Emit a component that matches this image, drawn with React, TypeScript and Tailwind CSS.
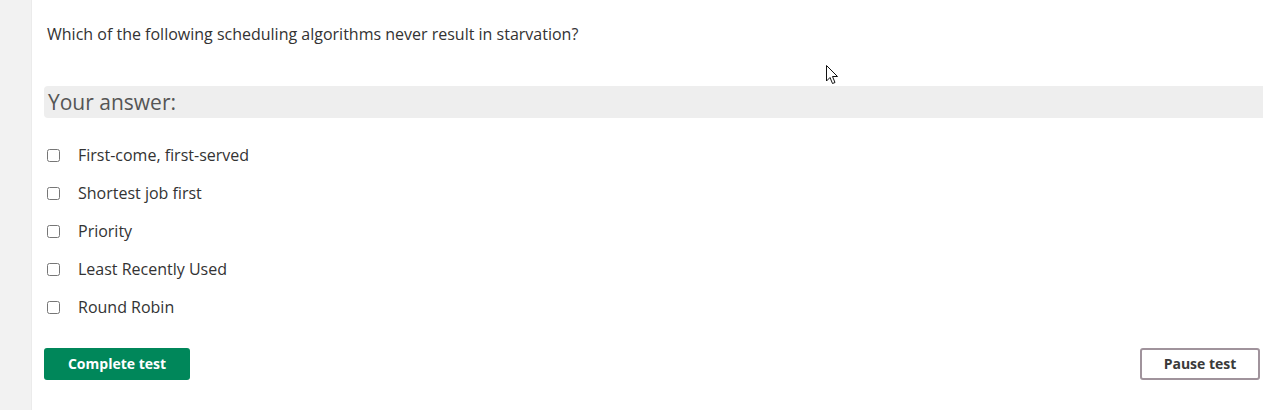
import React from "react";

const options = [
  "First-come, first-served",
  "Shortest job first",
  "Priority",
  "Least Recently Used",
  "Round Robin",
];

export default function App() {
  return (
    <div
      className="relative flex h-[410px] w-full bg-white text-[#333]"
      style={{ fontFamily: '"Open Sans", "Noto Sans", sans-serif' }}
    >
      <div className="w-[32px] shrink-0 border-r border-[#ebebeb] bg-[#f2f2f2]" />
      <div className="flex min-w-0 flex-1 flex-col pl-[12px] pt-[22px]">
        <p className="px-[3px] text-[16px] leading-[24px] text-[#333]">
          Which of the following scheduling algorithms never result in starvation?
        </p>
        <div className="mt-[40px] flex h-[32px] items-center rounded-l-[4px] bg-[#eeeeee] pl-[4px]">
          <span className="text-[21px] leading-[28px] text-[#555]">Your answer:</span>
        </div>
        <div className="mt-[18px] flex flex-col">
          {options.map((o) => (
            <label key={o} className="flex h-[38px] items-center pl-[3px]">
              <input type="checkbox" className="m-0 h-[13px] w-[13px]" />
              <span className="ml-[18px] text-[16px] leading-[24px] text-[#333]">{o}</span>
            </label>
          ))}
        </div>
        <div className="mt-[22px] flex items-center justify-between pr-[3px]">
          <button className="flex h-[32px] w-[146px] items-center justify-center rounded-[3px] bg-[#00875a] pb-[1px] text-[14px] font-bold leading-[20px] text-white">
            Complete test
          </button>
          <button className="flex h-[32px] w-[120px] items-center justify-center rounded-[3px] border-2 border-[#a0939c] bg-white pb-[1px] text-[14px] font-bold leading-[20px] text-[#3a3a3a]">
            Pause test
          </button>
        </div>
      </div>
      <svg
        className="absolute left-[826px] top-[65px]"
        width="13"
        height="20"
        viewBox="0 0 13 20"
      >
        <path
          d="M0.5 0.5 L0.5 16 L4 12.5 L6.5 18.5 L9 17.5 L6.5 11.5 L11.5 11.5 Z"
          fill="white"
          stroke="#111"
          strokeWidth="1"
          strokeLinejoin="miter"
        />
      </svg>
    </div>
  );
}
